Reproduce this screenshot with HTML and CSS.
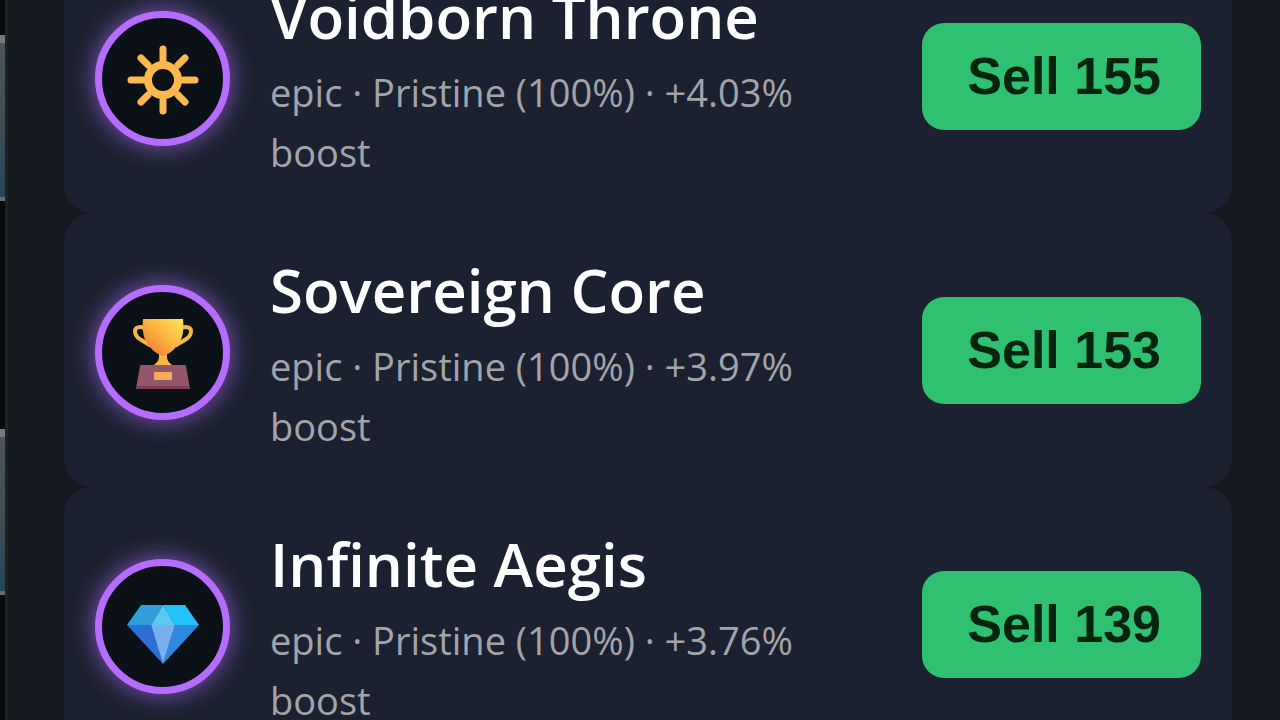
FILE: index.html
```
<!DOCTYPE html>
<html lang="en">
<head>
    <meta charset="UTF-8">
    <title>Inventory</title>
    <link rel="stylesheet" href="styles.css">
</head>
<body>
    <div class="reel">
        <div class="tile"></div>
        <div class="tile"></div>
    </div>
    <main class="panel">
        <ul class="items">
            <li class="item">
                <div class="item-icon">
                    <svg viewBox="0 0 72 72" fill="none" stroke="#fdb94e">
                        <circle cx="36" cy="36" r="15" stroke-width="8"/>
                        <path stroke-width="7" stroke-linecap="round" d="M36 5v11M36 56v11M4 36h12M56 36h12M14 14l7 7M51 51l7 7M58 14l-7 7M21 51l-7 7"/>
                    </svg>
                </div>
                <div class="item-info">
                    <h2>Voidborn Throne</h2>
                    <p>epic · Pristine (100%) · +4.03% boost</p>
                </div>
                <button class="sell-btn">Sell 155</button>
            </li>
            <li class="item">
                <div class="item-icon">
                    <svg viewBox="0 0 72 72">
                        <defs>
                            <linearGradient id="gold" x1="0" y1="1" x2="1" y2="0">
                                <stop offset="0.2" stop-color="#f28a3c"/>
                                <stop offset="0.55" stop-color="#fdb53f"/>
                                <stop offset="1" stop-color="#ffe75e"/>
                            </linearGradient>
                        </defs>
                        <path fill="none" stroke="#f3b747" stroke-width="4" d="M18 10C10 7 6 11 9 17C11 22 18 23 24 28M54 10C62 7 66 11 63 17C61 22 54 23 48 28"/>
                        <path fill="#f8b644" d="M32 34h8v4c0 5 2 7 7 10H25c5-3 7-5 7-10z"/>
                        <path fill="url(#gold)" d="M16 1h40c1 10 0 18-4 24c-4 6-9 11-16 13c-7-2-12-7-16-13c-4-6-5-14-4-24z"/>
                        <path fill="#93566a" d="M13 48q0-1 1-1h44q1 0 1 1l4 23H9z"/>
                        <path fill="#7d4057" d="M10 68h52l1 3H9z"/>
                        <rect x="27" y="54" width="18" height="8" rx="1" fill="#f3ad58"/>
                    </svg>
                </div>
                <div class="item-info">
                    <h2>Sovereign Core</h2>
                    <p>epic · Pristine (100%) · +3.97% boost</p>
                </div>
                <button class="sell-btn">Sell 153</button>
            </li>
            <li class="item">
                <div class="item-icon">
                    <svg viewBox="0 0 72 72">
                        <path fill="#2f9edb" d="M14 13h22L24 33H0z"/>
                        <path fill="#22c3f8" d="M36 13h22l14 20H48z"/>
                        <path fill="#5ac8f5" d="M36 13l12 20H24z"/>
                        <path fill="#2d6fd2" d="M0 33h24l12 39z"/>
                        <path fill="#3189df" d="M48 33h24L36 72z"/>
                        <path fill="#79aff0" d="M24 33h24L36 72z"/>
                    </svg>
                </div>
                <div class="item-info">
                    <h2>Infinite Aegis</h2>
                    <p>epic · Pristine (100%) · +3.76% boost</p>
                </div>
                <button class="sell-btn">Sell 139</button>
            </li>
        </ul>
    </main>
</body>
</html>
```

FILE: styles.css
```
* {
    margin: 0;
    padding: 0;
    box-sizing: border-box;
}

body {
    display: flex;
    height: 100vh;
    overflow: hidden;
    background-color: #08090c;
    color: #ffffff;
    font-family: "Open Sans", "Noto Sans", sans-serif;
}

.reel {
    display: flex;
    flex-direction: column;
    gap: 228px;
    width: 5px;
    padding-top: 35px;
}

.tile {
    height: 166px;
    border-top: 8px solid #77797a;
    border-bottom: 4px solid #686c70;
    background: linear-gradient(#4b565b, #3b4c56 60%, #24465a);
}

.panel {
    flex: 1;
    padding: 0 48px 0 56px;
    border-left: 3px solid #20211f;
    background-color: #141920;
}

/* list is scrolled partway through the first card */
.items {
    margin-top: -61px;
    list-style: none;
}

.item {
    display: flex;
    align-items: center;
    gap: 40px;
    padding: 31px;
    border-radius: 28px;
    background-color: #1b2130;
}

.item-icon {
    display: flex;
    flex-shrink: 0;
    align-items: center;
    justify-content: center;
    width: 135px;
    height: 135px;
    margin-top: 4px;
    padding-top: 4px;
    border: 7px solid #b66dff;
    border-radius: 50%;
    background-color: #0c1118;
    box-shadow: 0 0 24px rgba(182, 109, 255, 0.7);
}

.item-icon svg {
    width: 72px;
    height: 72px;
}

.item-info {
    flex: 1;
}

.item-info h2 {
    font-size: 60px;
    font-weight: 600;
    line-height: 92px;
}

.item-info p {
    color: #a2a4aa;
    font-size: 38px;
    line-height: 60px;
}

.sell-btn {
    flex-shrink: 0;
    padding: 24px 40px 24px 45px;
    border: none;
    border-radius: 22px;
    background-color: #2fc071;
    color: #04240f;
    font-family: "Liberation Sans", Arial, sans-serif;
    font-size: 52px;
    font-weight: bold;
    line-height: 59px;
    cursor: pointer;
}
```
